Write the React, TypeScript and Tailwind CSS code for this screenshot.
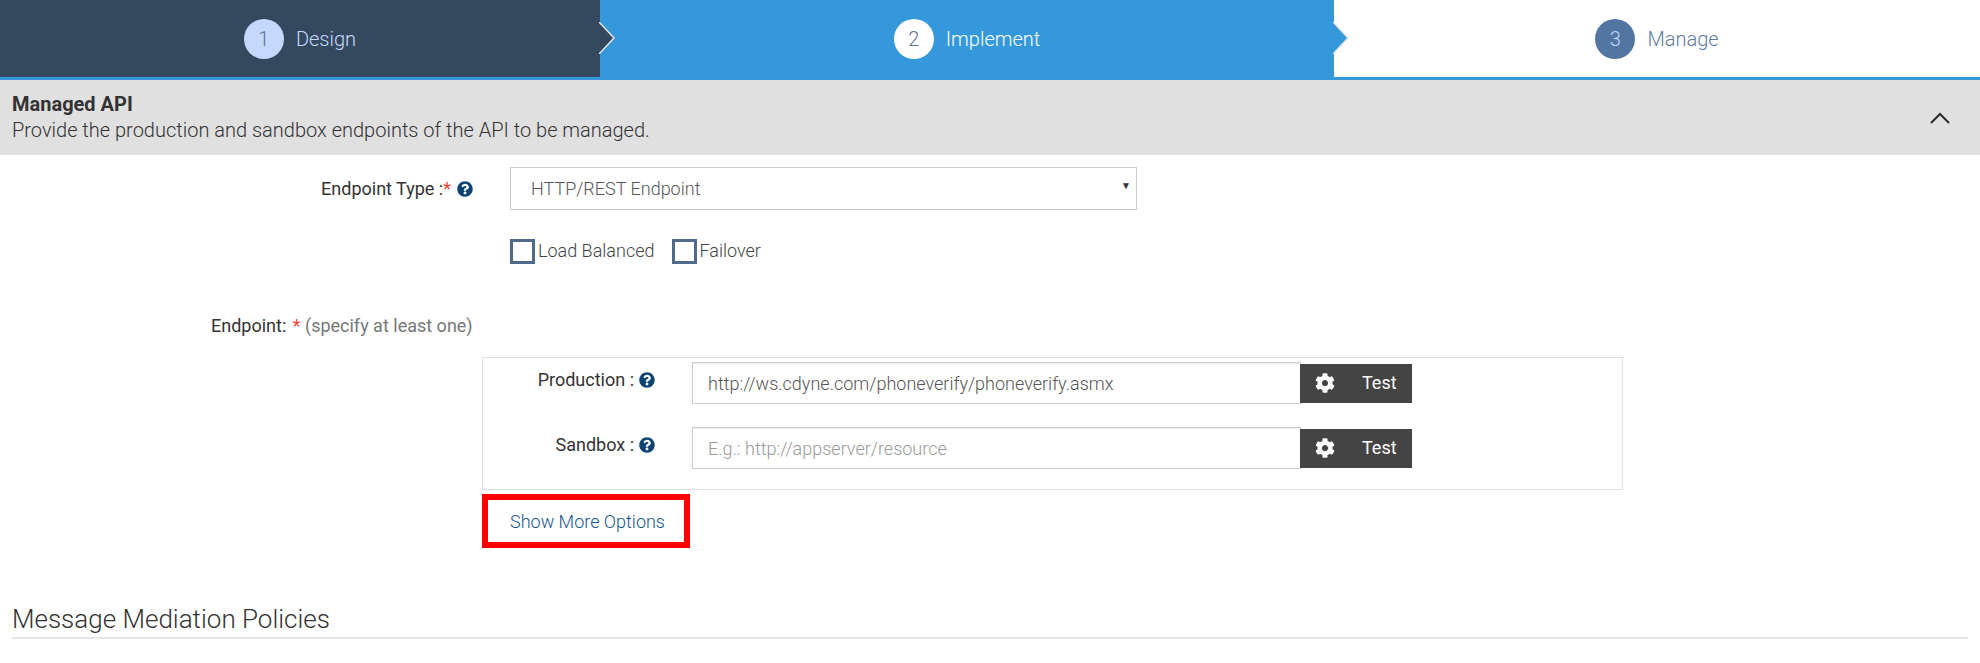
import { FaCog, FaQuestionCircle } from "react-icons/fa";

function Step({ num, label, width, rowClass, circleClass, labelClass, arrow }: {
  num: number;
  label: string;
  width: string;
  rowClass: string;
  circleClass: string;
  labelClass: string;
  arrow?: string;
}) {
  return (
    <div className={`relative flex items-start justify-center pt-[19px] ${width} ${rowClass}`}>
      <div className="flex items-center gap-3">
        <span className={`flex h-10 w-10 items-center justify-center rounded-full text-[20px] font-light ${circleClass}`}>{num}</span>
        <span className={`text-[20px] font-light ${labelClass}`}>{label}</span>
      </div>
      {arrow && (
        <svg className="absolute left-full top-[22px] z-10 -ml-px" width="17" height="32" viewBox="0 0 17 32">
          <path d="M0 0 L15 16 L0 32 Z" fill={arrow} />
          <path d="M0 0 L15 16 L0 32" fill="none" stroke="#e6e6e6" strokeWidth="1.5" />
        </svg>
      )}
    </div>
  );
}

function HelpIcon() {
  return <FaQuestionCircle className="text-[16px] text-[#0d4373]" />;
}

function EndpointRow({ label, value, placeholder }: { label: string; value?: string; placeholder?: string }) {
  return (
    <div className="flex items-center">
      <div className="-mt-[7px] flex w-[172px] items-center justify-end gap-[5px] text-[#333]">
        <span>{label} :</span>
        <HelpIcon />
      </div>
      <div className={`ml-[37px] flex h-[42px] w-[609px] items-center border border-[#ccc] px-[15px] font-light shadow-[inset_0_1px_1px_rgba(0,0,0,0.075)] ${value ? "text-[#555]" : "text-[#999]"}`}>
        {value ?? placeholder}
      </div>
      <button className="-ml-px flex h-[39px] w-[112px] items-center bg-[#444] pl-[15px] font-normal text-white">
        <FaCog className="text-[20px]" />
        <span className="ml-[27px] -mt-[2px]">Test</span>
      </button>
    </div>
  );
}

export default function App() {
  return (
    <div className="h-[663px] overflow-hidden bg-white font-['Roboto',sans-serif] text-[18px]">
      <div className="flex h-[80px] border-b-[3px] border-[#3498db]">
        <Step num={1} label="Design" width="w-[600px]" rowClass="h-[77px] bg-[#34495e]" circleClass="bg-[#c5d8ff] text-[#5f7390]" labelClass="text-[#c5d8ff]" arrow="#34495e" />
        <Step num={2} label="Implement" width="w-[734px]" rowClass="h-[80px] bg-[#3498db]" circleClass="bg-white text-[#5f7390]" labelClass="text-white" arrow="#3498db" />
        <Step num={3} label="Manage" width="flex-1" rowClass="h-[77px] bg-white" circleClass="bg-[#5275a2] text-[#c5d8ff]" labelClass="text-[#5f7ba3]" />
      </div>

      <div className="flex h-[75px] items-center justify-between bg-[#e0e0e0] pl-3 pr-[30px] text-[#333]">
        <div className="-mt-[1px]">
          <div className="text-[20px] font-bold leading-[26px]">Managed API</div>
          <div className="text-[20px] font-light leading-[26px]">Provide the production and sandbox endpoints of the API to be managed.</div>
        </div>
        <svg width="20" height="12" viewBox="0 0 20 12" fill="none" stroke="#2b2b2b" strokeWidth="2">
          <path d="M1 11 L10 2 L19 11" />
        </svg>
      </div>

      <div className="mt-3 flex items-center">
        <div className="flex w-[473px] items-center justify-end gap-[6px] text-[#333]">
          <span>Endpoint Type :<span className="text-[#f44336]">*</span></span>
          <HelpIcon />
        </div>
        <div className="relative ml-[37px] flex h-[43px] w-[627px] items-center border border-[#ccc] px-[20px] font-light text-[#555]">
          HTTP/REST Endpoint
          <span className="absolute right-[5px] top-[10px] text-[10px] text-[#333]">▼</span>
        </div>
      </div>

      <div className="ml-[510px] mt-[29px] flex items-center font-light text-[#444]">
        <span className="h-[25px] w-[25px] border-[3px] border-[#4f6a8a]" />
        <span className="ml-[3px] -mt-[2px]">Load Balanced</span>
        <span className="ml-[17px] h-[25px] w-[25px] border-[3px] border-[#4f6a8a]" />
        <span className="ml-[3px] -mt-[2px]">Failover</span>
      </div>

      <div className="ml-[211px] mt-[52px] h-[19px] leading-[19px] text-[#333]">
        Endpoint: <span className="ml-[2px] text-[#f44336]">*</span> <span className="text-[#777]">(specify at least one)</span>
      </div>

      <div className="ml-[482px] mt-[22px] flex h-[133px] w-[1141px] flex-col gap-[23px] border border-[#e0e0e0] pt-[4px]">
        <EndpointRow label="Production" value="http://ws.cdyne.com/phoneverify/phoneverify.asmx" />
        <EndpointRow label="Sandbox" placeholder="E.g.: http://appserver/resource" />
      </div>

      <div className="ml-[482px] mt-[4px] flex h-[54px] w-[208px] items-center border-[6px] border-[#ff0000] pl-[22px] font-light text-[#14568c]">
        Show More Options
      </div>

      <div className="mx-3 mt-[55px] border-b-2 border-[#e6e6e6] pb-[1px] text-[26px] font-light leading-[33px] text-[#333]">
        Message Mediation Policies
      </div>
    </div>
  );
}
